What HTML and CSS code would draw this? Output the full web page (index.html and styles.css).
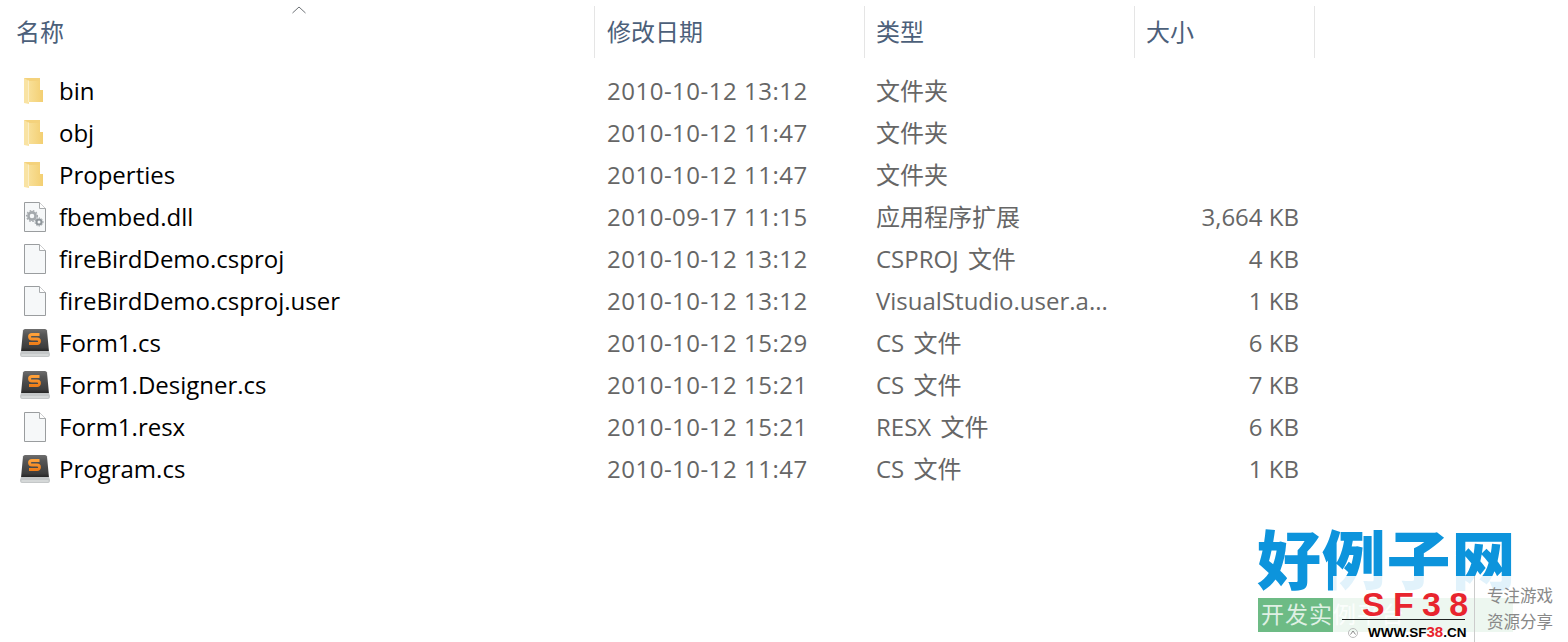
FILE: index.html
```html
<!DOCTYPE html>
<html lang="zh-CN">
<head>
    <meta charset="UTF-8">
    <meta name="viewport" content="width=device-width, initial-scale=1.0">
    <title>fireBirdDemo</title>
    <link rel="stylesheet" href="styles.css">
</head>
<body>
    <svg class="defs" width="0" height="0">
        <defs>
            <linearGradient id="folderBack" x1="0" y1="0" x2="1" y2="0">
                <stop offset="0" stop-color="#f8df97"/>
                <stop offset="1" stop-color="#f3cf72"/>
            </linearGradient>
            <linearGradient id="sublimeBody" x1="0" y1="0" x2="0" y2="1">
                <stop offset="0" stop-color="#6e6e6e"/>
                <stop offset="0.25" stop-color="#565656"/>
                <stop offset="0.8" stop-color="#3d3d3d"/>
                <stop offset="1" stop-color="#1f1f1f"/>
            </linearGradient>
            <linearGradient id="sublimeS" x1="0" y1="0" x2="0" y2="1">
                <stop offset="0" stop-color="#ffa13a"/>
                <stop offset="1" stop-color="#ef7f1a"/>
            </linearGradient>
            <symbol id="folder" viewBox="0 0 20 28">
                <path d="M0 1h16v12h3v12H5v2L0 26z" fill="#f9e3a3"/>
                <path d="M5 4h11v9h3v12H5z" fill="url(#folderBack)"/>
                <path d="M0 1h16v3H5z" fill="#f4d27c"/>
                <path d="M4 3.500h1V25H4z" fill="#fbeec4"/>
            </symbol>
            <symbol id="page" viewBox="0 0 22 30">
                <path d="M.5.5h15l6 6v23H.5z" fill="#f6f8f9" stroke="#9a9d9f"/>
                <path d="M15.5.5v6h6" fill="#fff" stroke="#a8abad"/>
            </symbol>
            <symbol id="gear-page" viewBox="0 0 22 30">
                <path d="M.5.5h15l6 6v23H.5z" fill="#f6f8f9" stroke="#9a9d9f"/>
                <path d="M15.5.5v6h6" fill="#fff" stroke="#a8abad"/>
                <circle cx="8" cy="14" r="3.6" fill="none" stroke="#a4a9ad" stroke-width="2.6"/>
                <circle cx="8" cy="14" r="5.4" fill="none" stroke="#a4a9ad" stroke-width="1.3" stroke-dasharray="1.6 1.6"/>
                <circle cx="15" cy="20" r="2.5" fill="none" stroke="#8f969b" stroke-width="2"/>
                <circle cx="15" cy="20" r="4" fill="none" stroke="#8f969b" stroke-width="1" stroke-dasharray="1.3 1.3"/>
            </symbol>
            <symbol id="sublime" viewBox="0 0 30 28">
                <path d="M3 1.500Q3.500 0 5 0h20q1.500 0 2 1.500L29 23H1z" fill="url(#sublimeBody)"/>
                <path d="M1 22h28l1 3q0 3-2 3H2q-2 0-2-3z" fill="#c4c7c8"/>
                <path d="M1.500 25.500h27v1h-27z" fill="#e6e8e8"/>
                <path d="M19.500 5.500H12Q9.500 5.500 9.500 7.700T12 10H17Q19.500 10 19.500 12.300T17 14.500H9" fill="none" stroke="url(#sublimeS)" stroke-width="2.800"/>
            </symbol>
        </defs>
    </svg>

    <div class="explorer">
        <div class="header-row">
            <div class="head-cell">名称
                <svg class="sort-caret" width="14" height="8" viewBox="0 0 14 8"><path d="M.5 7 7 1l6.500 6" fill="none" stroke="#6d7176"/></svg>
            </div>
            <div class="head-cell">修改日期</div>
            <div class="head-cell tight">类型</div>
            <div class="head-cell tight">大小</div>
        </div>

        <div class="file-list">
            <div class="file-row">
                <div class="name"><span class="icon-box"><svg class="ico-folder"><use href="#folder"/></svg></span>bin</div>
                <div class="muted date">2010-10-12 13:12</div>
                <div class="muted type">文件夹</div>
                <div class="muted size"></div>
            </div>
            <div class="file-row">
                <div class="name"><span class="icon-box"><svg class="ico-folder"><use href="#folder"/></svg></span>obj</div>
                <div class="muted date">2010-10-12 11:47</div>
                <div class="muted type">文件夹</div>
                <div class="muted size"></div>
            </div>
            <div class="file-row">
                <div class="name"><span class="icon-box"><svg class="ico-folder"><use href="#folder"/></svg></span>Properties</div>
                <div class="muted date">2010-10-12 11:47</div>
                <div class="muted type">文件夹</div>
                <div class="muted size"></div>
            </div>
            <div class="file-row">
                <div class="name"><span class="icon-box"><svg class="ico-page"><use href="#gear-page"/></svg></span>fbembed.dll</div>
                <div class="muted date">2010-09-17 11:15</div>
                <div class="muted type">应用程序扩展</div>
                <div class="muted size">3,664 KB</div>
            </div>
            <div class="file-row">
                <div class="name"><span class="icon-box"><svg class="ico-page"><use href="#page"/></svg></span>fireBirdDemo.csproj</div>
                <div class="muted date">2010-10-12 13:12</div>
                <div class="muted type">CSPROJ 文件</div>
                <div class="muted size">4 KB</div>
            </div>
            <div class="file-row">
                <div class="name"><span class="icon-box"><svg class="ico-page"><use href="#page"/></svg></span>fireBirdDemo.csproj.user</div>
                <div class="muted date">2010-10-12 13:12</div>
                <div class="muted type">VisualStudio.user.a...</div>
                <div class="muted size">1 KB</div>
            </div>
            <div class="file-row">
                <div class="name"><span class="icon-box"><svg class="ico-sublime"><use href="#sublime"/></svg></span>Form1.cs</div>
                <div class="muted date">2010-10-12 15:29</div>
                <div class="muted type">CS 文件</div>
                <div class="muted size">6 KB</div>
            </div>
            <div class="file-row">
                <div class="name"><span class="icon-box"><svg class="ico-sublime"><use href="#sublime"/></svg></span>Form1.Designer.cs</div>
                <div class="muted date">2010-10-12 15:21</div>
                <div class="muted type">CS 文件</div>
                <div class="muted size">7 KB</div>
            </div>
            <div class="file-row">
                <div class="name"><span class="icon-box"><svg class="ico-page"><use href="#page"/></svg></span>Form1.resx</div>
                <div class="muted date">2010-10-12 15:21</div>
                <div class="muted type">RESX 文件</div>
                <div class="muted size">6 KB</div>
            </div>
            <div class="file-row">
                <div class="name"><span class="icon-box"><svg class="ico-sublime"><use href="#sublime"/></svg></span>Program.cs</div>
                <div class="muted date">2010-10-12 11:47</div>
                <div class="muted type">CS 文件</div>
                <div class="muted size">1 KB</div>
            </div>
        </div>
    </div>

    <div class="watermark">
        <div class="wm-title">好例子网</div>
        <div class="wm-bar">开发实例平台</div>
        <div class="wm-veil"></div>
        <div class="wm-sf">SF38</div>
        <div class="wm-rule"></div>
        <svg class="wm-badge" width="10" height="10" viewBox="0 0 10 10"><circle cx="5" cy="5" r="4.500" fill="none" stroke="#bbb"/><path d="M2.500 6.500 5 3l2.500 3.500" fill="none" stroke="#888"/></svg>
        <div class="wm-url">WWW.SF<span class="wm-red">38</span>.CN</div>
        <div class="wm-divider"></div>
        <div class="wm-slogan">专注游戏<br>资源分享</div>
    </div>
</body>
</html>
```

FILE: styles.css
```css
body {
    margin: 0;
    height: 642px;
    overflow: hidden;
    background: #fff;
    font-family: "Open Sans", "Noto Sans CJK SC", sans-serif;
    position: relative;
}

.defs {
    position: absolute;
}

.explorer {
    padding-top: 6px;
}

.header-row,
.file-row {
    display: grid;
    grid-template-columns: 595px 270px 270px 180px;
}

.header-row {
    height: 51px;
}

.head-cell {
    position: relative;
    padding: 0 12px;
    line-height: 52px;
    font-size: 24px;
    color: #4c607a;
    border-right: 1px solid #e5e5e5;
    box-sizing: border-box;
}

.head-cell:first-child {
    padding-left: 16px;
}

.head-cell.tight {
    padding-left: 11px;
}

.sort-caret {
    position: absolute;
    left: 292px;
    top: 0;
}

.file-list {
    padding-top: 13px;
}

.file-row {
    height: 42px;
    line-height: 42px;
    font-size: 24px;
}

.name {
    display: flex;
    align-items: center;
    color: #000;
}

.icon-box {
    width: 59px;
    height: 42px;
    flex: none;
    display: flex;
    align-items: center;
}

.ico-folder {
    width: 20px;
    height: 28px;
    margin-left: 24px;
}

.ico-page {
    width: 22px;
    height: 30px;
    margin-left: 24px;
}

.ico-sublime {
    width: 30px;
    height: 28px;
    margin-left: 20px;
}

.muted {
    padding-left: 12px;
    color: #666;
}

.date {
    letter-spacing: 0.5px;
}

.type {
    padding-left: 11px;
    word-spacing: 3px;
}

.size {
    padding: 0 16px 0 0;
    text-align: right;
}

.watermark {
    position: absolute;
    left: 1240px;
    top: 515px;
    width: 328px;
    height: 127px;
    overflow: hidden;
}

.wm-title {
    position: absolute;
    left: 17px;
    top: 9px;
    font-size: 64px;
    line-height: 72px;
    font-weight: 900;
    letter-spacing: 0.8px;
    color: #0d94dc;
    white-space: nowrap;
}

.wm-bar {
    position: absolute;
    left: 18px;
    top: 83px;
    width: 255px;
    height: 34px;
    line-height: 33px;
    padding-left: 3px;
    box-sizing: border-box;
    background: #6dbb85;
    color: #dff0e4;
    font-size: 23px;
    letter-spacing: 1px;
    white-space: nowrap;
    overflow: hidden;
}

.wm-veil {
    position: absolute;
    left: 93px;
    top: 61px;
    width: 180px;
    height: 66px;
    background: rgba(255, 255, 255, 0.88);
}

.wm-sf {
    position: absolute;
    left: 122px;
    top: 72px;
    font-family: "Liberation Sans", sans-serif;
    font-size: 34px;
    line-height: 35px;
    font-weight: 700;
    letter-spacing: 8.300px;
    color: #e8252e;
    white-space: nowrap;
}

.wm-rule {
    position: absolute;
    left: 102px;
    top: 104px;
    width: 123px;
    height: 1px;
    background: #222;
}

.wm-badge {
    position: absolute;
    left: 108px;
    top: 113px;
}

.wm-url {
    position: absolute;
    left: 128px;
    top: 108px;
    font-family: "Liberation Sans", sans-serif;
    font-size: 13.500px;
    line-height: 18px;
    font-weight: 700;
    color: #000;
    white-space: nowrap;
}

.wm-red {
    color: #e8252e;
    font-size: 15px;
}

.wm-divider {
    position: absolute;
    left: 234px;
    top: 61px;
    width: 1px;
    height: 66px;
    background: #ccc;
}

.wm-slogan {
    position: absolute;
    left: 247px;
    top: 68px;
    font-size: 16.500px;
    line-height: 26px;
    color: #888;
    white-space: nowrap;
}
```
